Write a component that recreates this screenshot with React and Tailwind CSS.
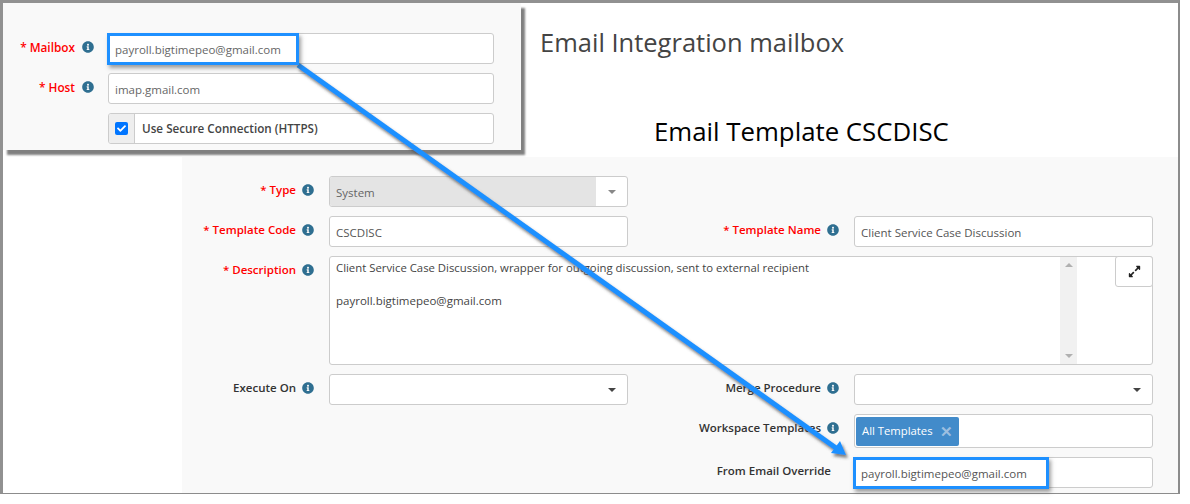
import { FaInfoCircle, FaExpandAlt, FaCheck } from "react-icons/fa";

const font = "font-['Open_Sans',sans-serif]";

function Info() {
  return <FaInfoCircle className="text-[#2f6f91] text-[12px] shrink-0" />;
}

function Label({ children, required, info = true }) {
  return (
    <div className={`flex justify-end gap-[6px] h-[31px] pt-[5px] text-[11.5px] leading-[17px] font-semibold ${info ? "pr-[15px]" : "pr-[23px]"} ${required ? "text-[#ff0000]" : "text-[#333]"}`}>
      <span className="whitespace-nowrap">{required && "* "}{children}</span>
      {info && <span className="pt-[3px]"><Info /></span>}
    </div>
  );
}

function Field({ children, className = "" }) {
  return (
    <div className={`h-[31px] bg-white border border-[#ccc] rounded-[3px] px-[6px] text-[11.5px] leading-[31px] text-[#555] ${className}`}>
      {children}
    </div>
  );
}

function Select({ value, disabled }) {
  return (
    <div className="flex h-[31px] bg-white border border-[#ccc] rounded-[3px] overflow-hidden text-[11.5px] leading-[31px] text-[#666]">
      <div className={`flex-1 px-[6px] ${disabled ? "bg-[#e4e4e4]" : ""}`}>{value}</div>
      <div className="w-[31px] flex items-center justify-center">
        <div className={`w-0 h-0 border-x-[4px] border-x-transparent border-t-[4px] ${disabled ? "border-t-[#888]" : "border-t-[#444]"}`} />
      </div>
    </div>
  );
}

function PopupLabel({ children }) {
  return (
    <div className="absolute right-full mr-[14px] top-[6px] flex gap-[7px] text-[11.8px] leading-[17px] font-semibold text-[#ff0000] whitespace-nowrap">
      <span>{children}</span>
      <span className="pt-[2px]"><Info /></span>
    </div>
  );
}

function MailboxPopup() {
  return (
    <div className="absolute left-0 top-0 w-[518px] h-[147px] bg-[#f9f9f9] shadow-[4px_5px_2px_#808080] pt-[30px] pl-[105px] pr-[27px] flex flex-col gap-[9px] z-10">
      <div className="relative">
        <PopupLabel>* Mailbox</PopupLabel>
        <Field className="text-[#666]">payroll.bigtimepeo@gmail.com</Field>
      </div>
      <div className="relative">
        <PopupLabel>* Host</PopupLabel>
        <Field className="text-[#666]">imap.gmail.com</Field>
      </div>
      <div className="flex h-[31px] bg-white border border-[#ccc] rounded-[3px] overflow-hidden">
        <div className="w-[26px] bg-[#eee] border-r border-[#ccc] flex items-center justify-center">
          <div className="w-[13px] h-[13px] bg-[#0075ff] rounded-[2px] flex items-center justify-center">
            <FaCheck className="text-white text-[9px]" />
          </div>
        </div>
        <div className="pl-[7px] text-[11.7px] leading-[29px] font-semibold text-[#444]">Use Secure Connection (HTTPS)</div>
      </div>
    </div>
  );
}

function Arrow() {
  return (
    <svg className="absolute left-0 top-0 z-20 pointer-events-none" width="1190" height="504" viewBox="0 0 1190 504">
      <defs>
        <filter id="arrowShadow" x="-5%" y="-5%" width="110%" height="110%">
          <feDropShadow dx="2" dy="3" stdDeviation="1.5" floodColor="#444" floodOpacity="0.7" />
        </filter>
      </defs>
      <g filter="url(#arrowShadow)">
        <path d="M298 65 L836 448" stroke="#1e90ff" strokeWidth="5" fill="none" />
        <path d="M846 455 L831 453 L840 441 Z" fill="#1e90ff" />
      </g>
    </svg>
  );
}

function Callout({ className }) {
  return <div className={`absolute z-20 border-[3px] border-[#1e90ff] shadow-[2px_3px_4px_rgba(80,80,80,0.55)] ${className}`} />;
}

export default function App() {
  return (
    <div className={`relative w-[1190px] h-[504px] bg-white overflow-hidden ${font}`}>
      <div className="relative w-[1180px] h-[494px] border-t-[3px] border-l-[3px] border-r-[2px] border-b border-t-[#919191] border-l-[#919191] border-r-[#8c8c8c] border-b-[#8c8c8c] flex flex-col">
        <MailboxPopup />
        <div className="h-[154px] shrink-0 relative">
          <h1 className="pl-[537px] pt-[21px] text-[25.5px] leading-[36px] text-[#444]">Email Integration mailbox</h1>
          <h2 className="absolute left-[651px] top-[110px] text-[25.8px] leading-[36px] text-black whitespace-nowrap">Email Template CSCDISC</h2>
        </div>
        <div className="flex-1 ml-[179px] bg-[#f9f9f9] pt-[19px] grid grid-cols-[147px_299px_226px_299px] gap-y-[9px] content-start">
          <Label required>Type</Label>
          <Select value="System" disabled />
          <div className="col-span-2" />

          <Label required>Template Code</Label>
          <Field>CSCDISC</Field>
          <Label required>Template Name</Label>
          <Field className="text-[11.4px]">Client Service Case Discussion</Field>

          <Label required>Description</Label>
          <div className="col-span-3 relative h-[109px] bg-white border border-[#ccc] rounded-[3px] px-[6px] pt-[3px] text-[11.35px] leading-[16.5px] text-[#444]">
            <div>Client Service Case Discussion, wrapper for outgoing discussion, sent to external recipient</div>
            <div className="mt-[16.5px] text-[11.5px]">payroll.bigtimepeo@gmail.com</div>
            <div className="absolute left-[730px] top-0 bottom-0 w-[17px] bg-[#f1f1f1] flex flex-col justify-between items-center py-[6px]">
              <div className="w-0 h-0 border-x-[4px] border-x-transparent border-b-[4px] border-b-[#b0b0b0]" />
              <div className="w-0 h-0 border-x-[4px] border-x-transparent border-t-[4px] border-t-[#b0b0b0]" />
            </div>
            <div className="absolute -right-px -top-px w-[38px] h-[31px] bg-white border border-[#ccc] rounded-[3px] flex items-center justify-center">
              <FaExpandAlt className="text-[#222] text-[13px]" />
            </div>
          </div>

          <Label>Execute On</Label>
          <Select />
          <Label>Merge Procedure</Label>
          <Select />

          <div className="col-span-2" />
          <Label>Workspace Templates</Label>
          <div className="h-[34px] bg-white border border-[#ccc] rounded-[3px] pl-[1px] pt-[2px]">
            <div className="inline-flex items-center gap-[7px] h-[29px] bg-[#428bca] rounded-[2px] px-[6px] text-[11.3px] text-white">
              All Templates
              <span className="text-[#9dbfe0] text-[15px] font-bold leading-none">✕</span>
            </div>
          </div>

          <div className="col-span-2" />
          <Label info={false}>From Email Override</Label>
          <Field>payroll.bigtimepeo@gmail.com</Field>
        </div>
      </div>
      <Arrow />
      <Callout className="left-[107px] top-[33px] w-[192px] h-[32px]" />
      <Callout className="left-[853px] top-[457px] w-[196px] h-[32px]" />
    </div>
  );
}
